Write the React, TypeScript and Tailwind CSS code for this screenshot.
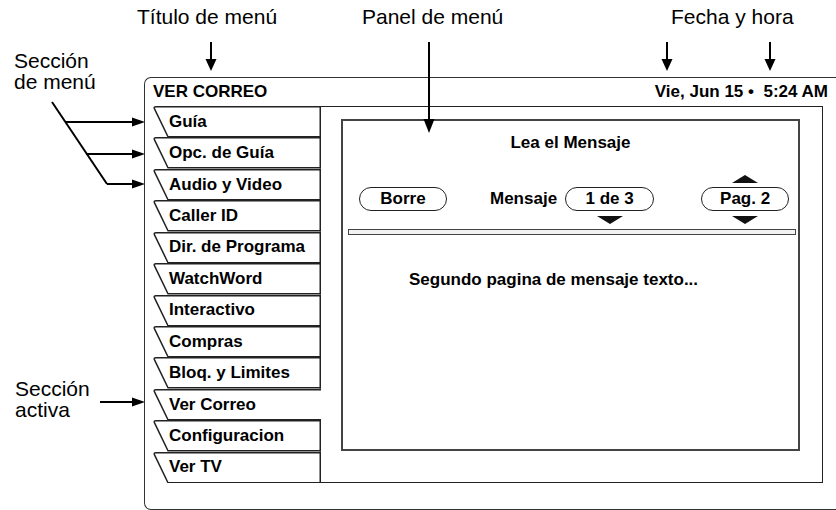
import React from 'react';

const tabs = [
  'Guía',
  'Opc. de Guía',
  'Audio y Video',
  'Caller ID',
  'Dir. de Programa',
  'WatchWord',
  'Interactivo',
  'Compras',
  'Bloq. y Limites',
  'Ver Correo',
  'Configuracion',
  'Ver TV',
];

const ACTIVE = 'Ver Correo';

function Tab({ label, active }: { label: string; active: boolean }) {
  return (
    <div className="relative flex-1 flex items-center pl-[16px]">
      <svg
        className="absolute inset-0 w-full h-full"
        viewBox="0 0 168 31"
        preserveAspectRatio="none"
        fill="none"
        stroke="#222"
        strokeWidth="1.5"
      >
        <path vectorEffect="non-scaling-stroke" d="M168 0.75 H3 Q0.6 0.75 1.4 2.6 L15 30.3 H168" />
        {!active && <path vectorEffect="non-scaling-stroke" d="M167.25 0 V31" />}
      </svg>
      <span className="relative leading-[20px]">{label}</span>
    </div>
  );
}

function Tri({ dir, show }: { dir: 'up' | 'down'; show: boolean }) {
  return (
    <svg width="26" height="8" viewBox="0 0 26 8" className={show ? '' : 'invisible'}>
      {dir === 'up' ? <polygon points="13,0 26,8 0,8" fill="#111" /> : <polygon points="0,0 26,0 13,8" fill="#111" />}
    </svg>
  );
}

function Pill({ text, width, up, down }: { text: string; width: string; up?: boolean; down?: boolean }) {
  return (
    <div className="flex flex-col items-center">
      <Tri dir="up" show={!!up} />
      <div className={`mt-[4px] h-[24px] ${width} rounded-full border-[1.5px] border-[#222] flex items-center justify-center leading-[20px]`}>
        {text}
      </div>
      <div className="mt-[5px] flex">
        <Tri dir="down" show={!!down} />
      </div>
    </div>
  );
}

function Callouts() {
  return (
    <>
      <div className="absolute left-[137px] top-[5px] text-[21px] leading-[24px]">Título de menú</div>
      <div className="absolute left-[362px] top-[5px] text-[21px] leading-[24px]">Panel de menú</div>
      <div className="absolute left-[671px] top-[5px] text-[21px] leading-[24px]">Fecha y hora</div>
      <div className="absolute left-[14px] top-[50px] text-[21px] leading-[21px]">
        Sección
        <br />
        de menú
      </div>
      <div className="absolute left-[15px] top-[378px] text-[21px] leading-[21px]">
        Sección
        <br />
        activa
      </div>
      <svg className="absolute inset-0 pointer-events-none" width="836" height="510" viewBox="0 0 836 510">
        <g stroke="#000" strokeWidth="2" fill="none">
          <line x1="211" y1="42" x2="211" y2="62" />
          <line x1="429" y1="42" x2="429" y2="122" />
          <line x1="667" y1="42" x2="667" y2="62" />
          <line x1="770" y1="42" x2="770" y2="62" />
          <line x1="52" y1="102" x2="107" y2="184" />
          <line x1="65" y1="122" x2="134" y2="122" />
          <line x1="86" y1="154" x2="134" y2="154" />
          <line x1="107" y1="184" x2="134" y2="184" />
          <line x1="100" y1="402" x2="134" y2="402" />
        </g>
        <g fill="#000">
          <polygon points="205.5,59 216.5,59 211,71" />
          <polygon points="423.5,119 434.5,119 429,133" />
          <polygon points="661.5,59 672.5,59 667,71" />
          <polygon points="764.5,59 775.5,59 770,71" />
          <polygon points="132,117.5 132,126.5 145,122" />
          <polygon points="132,149.5 132,158.5 145,154" />
          <polygon points="132,179.5 132,188.5 145,184" />
          <polygon points="132,397.5 132,406.5 145,402" />
        </g>
      </svg>
    </>
  );
}

export default function App() {
  return (
    <div className="relative w-[836px] h-[510px] overflow-hidden bg-white text-black font-['Liberation_Sans',Arial,sans-serif]">
      <div className="pt-[77px] pl-[144px]">
        <div className="w-[720px] h-[433px] border-[1.5px] border-r-0 border-[#333] rounded-l-[7px] pl-[8px]">
          <div className="w-[675px] font-bold text-[17px]">
            <div className="h-[28px] flex items-center justify-between leading-[20px]">
              <span>VER CORREO</span>
              <span className="whitespace-pre">Vie, Jun 15 •  5:24 AM</span>
            </div>
            <div className="w-[670px] h-[377px] flex">
              <div className="w-[168px] flex flex-col">
                {tabs.map((t) => (
                  <Tab key={t} label={t} active={t === ACTIVE} />
                ))}
              </div>
              <div className="flex-1 border-t-[1.5px] border-r-[1.5px] border-b-[1.5px] border-[#222] pl-[20px] pt-[12px]">
                <div className="w-[459px] h-[332px] border-2 border-[#444]">
                  <div className="mt-[12px] leading-[20px] text-center">Lea el Mensaje</div>
                  <div className="mt-[22px] pl-[16px] flex items-start">
                    <Pill text="Borre" width="w-[88px]" />
                    <div className="ml-[43px] mt-[12px] leading-[24px]">Mensaje</div>
                    <div className="ml-[8px]">
                      <Pill text="1 de 3" width="w-[89px]" down />
                    </div>
                    <div className="ml-[47px]">
                      <Pill text="Pag. 2" width="w-[88px]" up down />
                    </div>
                  </div>
                  <div className="mt-[5px] ml-[5px] mr-[2px] h-[6px] border border-[#444] bg-[#f2f2f2]" />
                  <div className="mt-[35px] pl-[66px] leading-[20px]">Segundo pagina de mensaje texto...</div>
                </div>
              </div>
            </div>
          </div>
        </div>
      </div>
      <Callouts />
    </div>
  );
}
